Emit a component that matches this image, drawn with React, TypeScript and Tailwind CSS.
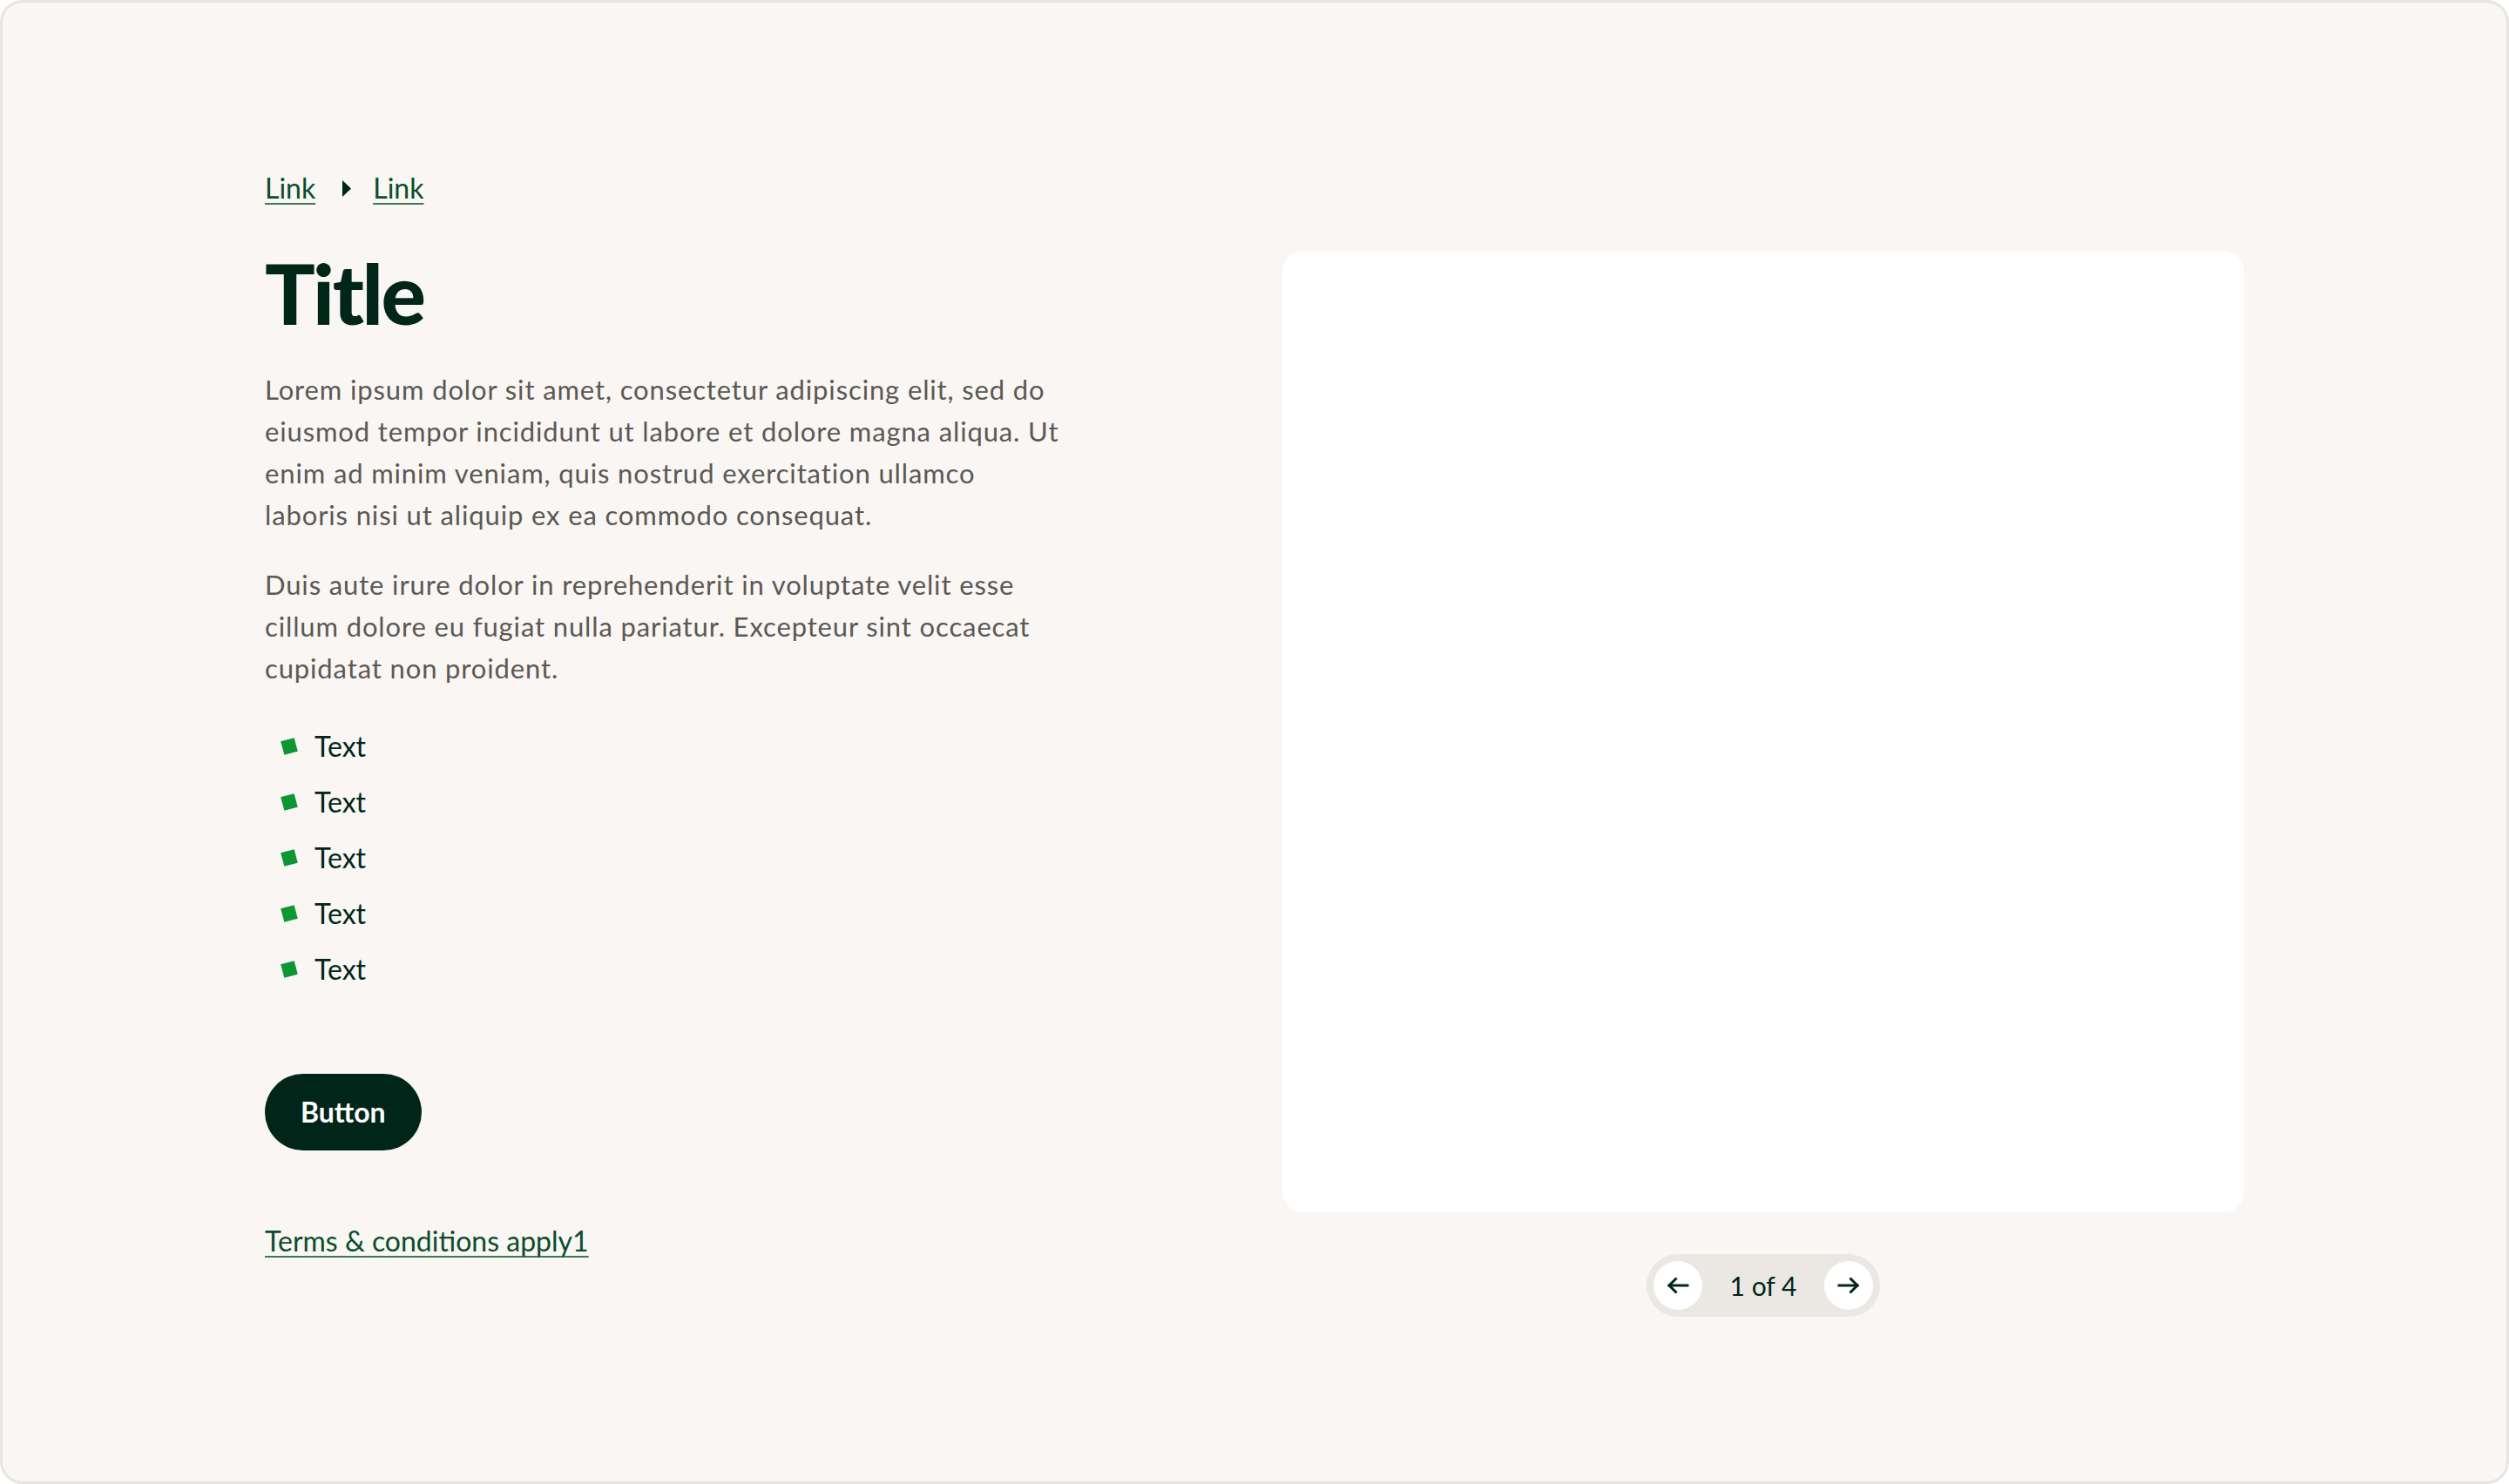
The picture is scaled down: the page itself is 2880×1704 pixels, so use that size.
const font = { fontFamily: "Lato, 'Noto Sans', sans-serif" };

const items = ["Text", "Text", "Text", "Text", "Text"];

const ArrowLeft = () => (
  <svg width="26" height="20" viewBox="0 0 26 20" fill="none" stroke="#00261a" strokeWidth="3" strokeLinecap="square">
    <path d="M24 10H3" />
    <path d="M10.5 2.5L3 10l7.5 7.5" />
  </svg>
);

const ArrowRight = () => (
  <svg width="26" height="20" viewBox="0 0 26 20" fill="none" stroke="#00261a" strokeWidth="3" strokeLinecap="square">
    <path d="M2 10h21" />
    <path d="M15.5 2.5L23 10l-7.5 7.5" />
  </svg>
);

export default function App() {
  return (
    <div className="bg-white">
      <div
        className="h-[1704px] w-full rounded-[26px] border-[3px] border-[#e8e4df] bg-[#f9f6f3] px-[301px] pt-[189px]"
        style={font}
      >
        <div className="grid grid-cols-2 gap-[64px]">
          {/* left column */}
          <div className="flex flex-col items-start">
            <nav className="flex items-center text-[32px] leading-[48px] text-[#0b4d2c]">
              <a className="underline decoration-[#3d7a58] decoration-2 underline-offset-[5px]" href="#">
                Link
              </a>
              <svg className="ml-[31px] mr-[25px]" width="10" height="19" viewBox="0 0 10 19">
                <path d="M0 0L10 9.5L0 19Z" fill="#00261a" />
              </svg>
              <a className="underline decoration-[#3d7a58] decoration-2 underline-offset-[5px]" href="#">
                Link
              </a>
            </nav>

            <h1 className="mt-[48px] text-[96px] leading-[96px] font-black tracking-[-0.025em] text-[#00261a]">
              Title
            </h1>

            <p className="mt-[39px] max-w-[916px] text-[31px] leading-[48px] tracking-[0.028em] text-[#5c5853]">
              Lorem ipsum dolor sit amet, consectetur adipiscing elit, sed do eiusmod tempor incididunt ut labore et
              dolore magna aliqua. Ut enim ad minim veniam, quis nostrud exercitation ullamco laboris nisi ut aliquip ex
              ea commodo consequat.
            </p>
            <p className="mt-[32px] max-w-[916px] text-[31px] leading-[48px] tracking-[0.028em] text-[#5c5853]">
              Duis aute irure dolor in reprehenderit in voluptate velit esse cillum dolore eu fugiat nulla pariatur.
              Excepteur sint occaecat cupidatat non proident.
            </p>

            <ul className="mt-[42px] flex flex-col gap-[16px]">
              {items.map((t, i) => (
                <li key={i} className="flex items-center text-[32px] leading-[48px] text-[#00261a]">
                  <span className="ml-[20px] h-[16px] w-[16px] -rotate-[15deg] bg-[#0d9732]" />
                  <span className="ml-[21px]">{t}</span>
                </li>
              ))}
            </ul>

            <button className="mt-[96px] h-[88px] rounded-full bg-[#00261a] px-[41px] text-[32px] font-bold text-white">
              Button
            </button>

            <a
              href="#"
              className="mt-[80px] text-[32px] leading-[48px] text-[#0b4d2c] underline decoration-[#3d7a58] decoration-2 underline-offset-[5px]"
            >
              Terms &amp; conditions apply1
            </a>
          </div>

          {/* right column */}
          <div className="mt-[96px] flex flex-col items-center">
            <div className="h-[1104px] w-full rounded-[24px] bg-white" />
            <div className="mt-[48px] flex h-[72px] items-center gap-[32px] rounded-full bg-[#ebe8e3] p-[8px]">
              <button className="flex h-[56px] w-[56px] items-center justify-center rounded-full bg-white">
                <ArrowLeft />
              </button>
              <span className="text-[30px] text-[#00261a]">1 of 4</span>
              <button className="flex h-[56px] w-[56px] items-center justify-center rounded-full bg-white">
                <ArrowRight />
              </button>
            </div>
          </div>
        </div>
      </div>
    </div>
  );
}
